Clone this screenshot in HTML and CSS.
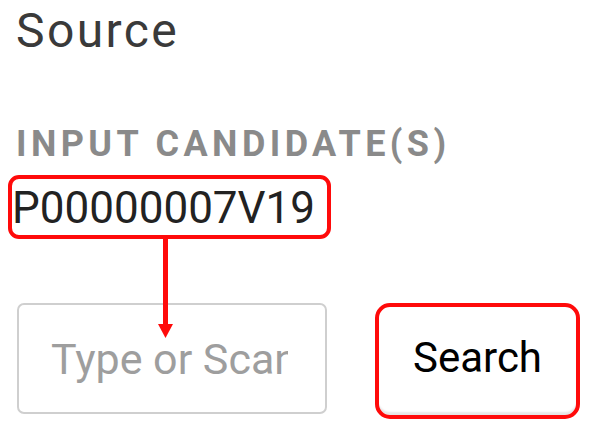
FILE: index.html
```html
<!DOCTYPE html>
<html lang="en">
<head>
  <meta charset="UTF-8">
  <meta name="viewport" content="width=device-width, initial-scale=1.0">
  <title>Source</title>
  <link rel="stylesheet" href="styles.css">
</head>
<body>
  <div class="panel">
    <!-- Título -->
    <h1 class="title">Source</h1>

    <!-- Candidatos -->
    <p class="label">Input Candidate(s)</p>
    <div class="candidate">P00000007V19</div>

    <!-- Entrada y botón -->
    <div class="search-row">
      <input type="text" class="scan-input" placeholder="Type or Scan Barcode">
      <button class="search-button">Search</button>
    </div>

    <!-- Flecha de anotación -->
    <svg class="arrow" width="18" height="101" viewBox="0 0 18 101">
      <line x1="8.5" y1="0" x2="8.5" y2="88" stroke="#ff0a0a" stroke-width="5"/>
      <polygon points="1,86 16,86 8.5,100" fill="#ff0a0a"/>
    </svg>
  </div>
</body>
</html>
```

FILE: styles.css
```css
/* Estilos generales */
body {
  margin: 0;
  padding: 0;
  background-color: #FFF;
  font-family: Roboto, "Liberation Sans", sans-serif;
}

.panel {
  position: relative;
  padding: 0 16px;
}

/* Título */
.title {
  margin: 2px 0 0;
  font-size: 48px;
  font-weight: 400;
  line-height: normal;
  letter-spacing: 2.4px;
  color: #3a3a3a;
}

.label {
  margin: 64px 0 0;
  font-size: 36px;
  font-weight: bold;
  line-height: normal;
  letter-spacing: 4.4px;
  text-transform: uppercase;
  color: #8a8a8a;
}

/* Caja del candidato */
.candidate {
  width: fit-content;
  margin: 10px 0 0 -8px;
  padding: 3px 12px 1px 0;
  border: 4px solid #ff0a0a;
  border-radius: 11px;
  font-size: 44px;
  line-height: 52px;
  color: #222;
}

/* Fila de búsqueda */
.search-row {
  display: flex;
  align-items: flex-start;
  gap: 48px;
  margin-top: 64px;
  padding-left: 1px;
}

.scan-input {
  box-sizing: border-box;
  width: 310px;
  height: 111px;
  padding: 0 37px 0 32px;
  border: 2px solid #cfcfcf;
  border-radius: 7px;
  font-family: Roboto, "Liberation Sans", sans-serif;
  font-size: 43px;
  color: #222;
  outline: none;
}

.scan-input::placeholder {
  color: #9e9e9e;
}

.search-button {
  box-sizing: border-box;
  width: 205px;
  height: 116px;
  padding: 0 0 8px;
  border: 4px solid #ff0a0a;
  border-radius: 15px;
  background-color: #FFF;
  box-shadow: inset 0 -4px 2px -1px rgba(0, 0, 0, 0.1);
  font-family: Roboto, "Liberation Sans", sans-serif;
  font-size: 42px;
  color: #000;
  cursor: pointer;
}

/* Flecha */
.arrow {
  position: absolute;
  left: 157px;
  top: 236px;
}
```
